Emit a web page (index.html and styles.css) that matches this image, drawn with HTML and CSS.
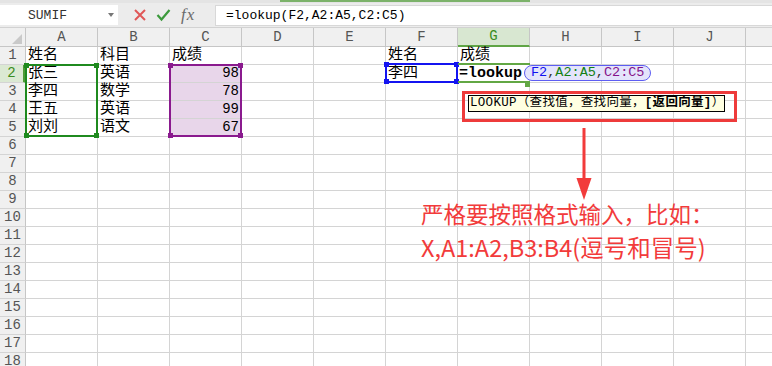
FILE: index.html
```html
<!DOCTYPE html>
<html lang="zh-CN">
<head>
    <meta charset="UTF-8">
    <title>LOOKUP</title>
    <link rel="stylesheet" href="styles.css">
</head>
<body>
    <div class="tab-strip"><div class="tab-active"></div></div>

    <div class="formula-bar">
        <div class="name-box">
            <span class="name-text">SUMIF</span>
            <span class="name-arrow"></span>
        </div>
        <div class="bar-icons">
            <svg class="icon-cancel" width="14" height="14" viewBox="0 0 14 14">
                <path d="M2 2 L12 12 M12 2 L2 12" stroke="#e05757" stroke-width="2" fill="none"/>
            </svg>
            <svg class="icon-enter" width="15" height="14" viewBox="0 0 15 14">
                <path d="M1.5 7 L5.5 11.5 L13.5 2" stroke="#3c9a3c" stroke-width="2.2" fill="none"/>
            </svg>
            <span class="icon-fx">fx</span>
        </div>
        <div class="formula-input">=lookup(F2,A2:A5,C2:C5)</div>
    </div>

    <div class="sheet-wrap">
        <table class="sheet">
            <colgroup>
                <col class="col-head">
                <col><col><col><col><col><col><col><col><col><col><col>
            </colgroup>
            <tr class="head-row">
                <th class="corner"><span class="corner-mark"></span></th>
                <th>A</th><th>B</th><th>C</th><th>D</th><th>E</th><th>F</th>
                <th class="head-active">G</th><th>H</th><th>I</th><th>J</th><th></th>
            </tr>
            <tr>
                <th>1</th>
                <td>姓名</td><td>科目</td><td>成绩</td><td></td><td></td>
                <td>姓名</td><td>成绩</td><td></td><td></td><td></td><td></td>
            </tr>
            <tr>
                <th class="row-active">2</th>
                <td>张三</td><td>英语</td><td class="picked num">98</td><td></td><td></td>
                <td>李四</td>
                <td class="editing"><span class="edit-fn">=lookup</span><span class="arg-pill"><span class="ref-f">F2</span>,<span class="ref-a">A2:A5</span>,<span class="ref-c">C2:C5</span></span></td>
                <td></td><td></td><td></td><td></td>
            </tr>
            <tr>
                <th>3</th>
                <td>李四</td><td>数学</td><td class="picked num">78</td><td></td><td></td>
                <td></td><td></td><td></td><td></td><td></td><td></td>
            </tr>
            <tr>
                <th>4</th>
                <td>王五</td><td>英语</td><td class="picked num">99</td><td></td><td></td>
                <td></td><td></td><td></td><td></td><td></td><td></td>
            </tr>
            <tr>
                <th>5</th>
                <td>刘刘</td><td>语文</td><td class="picked num">67</td><td></td><td></td>
                <td></td><td></td><td></td><td></td><td></td><td></td>
            </tr>
            <tr><th>6</th><td></td><td></td><td></td><td></td><td></td><td></td><td></td><td></td><td></td><td></td><td></td></tr>
            <tr><th>7</th><td></td><td></td><td></td><td></td><td></td><td></td><td></td><td></td><td></td><td></td><td></td></tr>
            <tr><th>8</th><td></td><td></td><td></td><td></td><td></td><td></td><td></td><td></td><td></td><td></td><td></td></tr>
            <tr><th>9</th><td></td><td></td><td></td><td></td><td></td><td></td><td></td><td></td><td></td><td></td><td></td></tr>
            <tr><th>10</th><td></td><td></td><td></td><td></td><td></td><td></td><td></td><td></td><td></td><td></td><td></td></tr>
            <tr><th>11</th><td></td><td></td><td></td><td></td><td></td><td></td><td></td><td></td><td></td><td></td><td></td></tr>
            <tr><th>12</th><td></td><td></td><td></td><td></td><td></td><td></td><td></td><td></td><td></td><td></td><td></td></tr>
            <tr><th>13</th><td></td><td></td><td></td><td></td><td></td><td></td><td></td><td></td><td></td><td></td><td></td></tr>
            <tr><th>14</th><td></td><td></td><td></td><td></td><td></td><td></td><td></td><td></td><td></td><td></td><td></td></tr>
            <tr><th>15</th><td></td><td></td><td></td><td></td><td></td><td></td><td></td><td></td><td></td><td></td><td></td></tr>
            <tr><th>16</th><td></td><td></td><td></td><td></td><td></td><td></td><td></td><td></td><td></td><td></td><td></td></tr>
            <tr><th>17</th><td></td><td></td><td></td><td></td><td></td><td></td><td></td><td></td><td></td><td></td><td></td></tr>
            <tr><th>18</th><td></td><td></td><td></td><td></td><td></td><td></td><td></td><td></td><td></td><td></td><td></td></tr>
        </table>

        <!-- range highlights drawn over the grid -->
        <div class="range range-a">
            <span class="handle h-tl"></span><span class="handle h-tr"></span>
            <span class="handle h-bl"></span><span class="handle h-br"></span>
        </div>
        <div class="range range-c">
            <span class="handle h-tl"></span><span class="handle h-tr"></span>
            <span class="handle h-bl"></span><span class="handle h-br"></span>
        </div>
        <div class="range range-f">
            <span class="handle h-tl"></span><span class="handle h-tr"></span>
            <span class="handle h-bl"></span><span class="handle h-br"></span>
        </div>
        <div class="edit-frame"><span class="edit-handle"></span></div>

        <div class="hint-box">
            <div class="hint-tip">LOOKUP（查找值，查找向量，<b>[返回向量]</b>）</div>
        </div>

        <svg class="note-arrow" width="18" height="74" viewBox="0 0 18 74">
            <rect x="7.5" y="0" width="3" height="54" fill="#f23b3b"/>
            <path d="M1.5 50 L16.5 50 L9 72 Z" fill="#f23b3b"/>
        </svg>

        <div class="note">
            <p class="note-line">严格要按照格式输入，比如：</p>
            <p class="note-line note-example">X,A1:A2,B3:B4(逗号和冒号)</p>
        </div>
    </div>
</body>
</html>
```

FILE: styles.css
```css
* {
    margin: 0;
    padding: 0;
    box-sizing: border-box;
}

body {
    width: 772px;
    height: 366px;
    overflow: hidden;
    background: #ffffff;
    font-family: "Liberation Mono", "Noto Sans CJK SC", monospace;
    color: #000000;
}

/* top strip + formula bar */

.tab-strip {
    height: 3px;
    background: #e4e4e4;
    display: flex;
}

.tab-active {
    margin-left: 280px;
    width: 250px;
    height: 2px;
    background: #7cb26a;
}

.formula-bar {
    height: 25px;
    background: #ececec;
    border-bottom: 1px solid #d2d2d2;
    display: flex;
    align-items: center;
}

.name-box {
    width: 118px;
    height: 20px;
    background: #ffffff;
    display: flex;
    align-items: center;
    position: relative;
}

.name-text {
    padding-left: 28px;
    font-size: 13px;
    color: #333333;
}

.name-arrow {
    position: absolute;
    left: 108px;
    top: 8px;
    border-left: 3px solid transparent;
    border-right: 3px solid transparent;
    border-top: 4px solid #777777;
}

.bar-icons {
    width: 97px;
    display: flex;
    align-items: center;
    padding-left: 15px;
}

.icon-cancel {
    margin-right: 9px;
}

.icon-enter {
    margin-right: 10px;
}

.icon-fx {
    font-family: "Liberation Serif", serif;
    font-style: italic;
    font-size: 17px;
    color: #6a6a6a;
    letter-spacing: 1px;
}

.formula-input {
    flex: 1;
    height: 21px;
    background: #ffffff;
    border: 1px solid #d8d8d8;
    border-right: none;
    padding-left: 10px;
    font-size: 13px;
    line-height: 19px;
}

/* grid */

.sheet-wrap {
    position: relative;
    height: 338px;
    overflow: hidden;
}

.sheet {
    table-layout: fixed;
    border-collapse: separate;
    border-spacing: 0;
    width: 818px;
}

.sheet col {
    width: 72px;
}

.sheet col.col-head {
    width: 26px;
}

.sheet th,
.sheet td {
    height: 18px;
    padding: 0;
    border-right: 1px solid #d4d4d4;
    border-bottom: 1px solid #d4d4d4;
    font-size: 15px;
    line-height: 17px;
    white-space: nowrap;
    text-align: left;
    font-weight: normal;
    vertical-align: middle;
}

.sheet td {
    padding-left: 2px;
}

.sheet tr > th {
    background: #f0f0f0;
    color: #555555;
    font-size: 14px;
    text-align: center;
    border-right-color: #c6c6c6;
}

.head-row th {
    height: 19px;
    text-align: center;
    font-size: 14px;
    color: #444444;
    border-right-color: #dcdcdc;
    border-bottom-color: #c6c6c6;
}

.head-row th.head-active {
    background: #d8e7d1;
    color: #3a8c22;
    border-bottom: 2px solid #5fa545;
}

.corner {
    position: relative;
}

.corner-mark {
    position: absolute;
    right: 3px;
    bottom: 2px;
    border-left: 10px solid transparent;
    border-bottom: 10px solid #c9c9c9;
}

.sheet th.row-active {
    background: #dbe9d3;
    color: #3a8c22;
    border-right: 3px solid #4e9a36;
}

.sheet td.picked {
    background: #e8d6ea;
}

.sheet td.num {
    text-align: right;
    padding-right: 2px;
    font-size: 14px;
}

.sheet td.editing {
    overflow: visible;
    padding-left: 1px;
}

.edit-fn {
    font-weight: bold;
    font-size: 15px;
}

.arg-pill {
    display: inline-block;
    margin-left: 2px;
    height: 16px;
    padding: 0 6px;
    border: 1px solid #5d5df2;
    border-radius: 8px;
    background: #e4e4fb;
    font-size: 13.5px;
    line-height: 14px;
    color: #333333;
    vertical-align: 1px;
}

.ref-f { color: #1010f0; }
.ref-a { color: #138013; }
.ref-c { color: #85128a; }

/* overlays */

.range {
    position: absolute;
    border: 2px solid;
}

.range-a {
    left: 25px;
    top: 36px;
    width: 73px;
    height: 73px;
    border-color: #1f8a1f;
}

.range-c {
    left: 169px;
    top: 36px;
    width: 73px;
    height: 73px;
    border-color: #8a1a8e;
}

.range-f {
    left: 385px;
    top: 35px;
    width: 73px;
    height: 20px;
    border-color: #1414f0;
}

.handle {
    position: absolute;
    width: 5px;
    height: 5px;
}

.range-a .handle { background: #1f8a1f; }
.range-c .handle { background: #8a1a8e; }
.range-f .handle { background: #1414f0; }

.h-tl { left: -3px; top: -3px; }
.h-tr { right: -3px; top: -3px; }
.h-bl { left: -3px; bottom: -3px; }
.h-br { right: -3px; bottom: -3px; }

.edit-frame {
    position: absolute;
    left: 458px;
    top: 35px;
    width: 72px;
    height: 20px;
    border-top: 2px solid #62a744;
    border-bottom: 2px solid #62a744;
    pointer-events: none;
}

.edit-handle {
    position: absolute;
    right: 0;
    bottom: -6px;
    width: 5px;
    height: 5px;
    background: #62a744;
}

.hint-box {
    position: absolute;
    left: 462px;
    top: 63px;
    width: 275px;
    height: 31px;
    border: 3px solid #ee3b3b;
    padding: 1px 0 0 3px;
}

.hint-tip {
    width: 257px;
    height: 17px;
    background: #ffffe1;
    border: 1px solid #000000;
    font-size: 12.5px;
    letter-spacing: 0.3px;
    line-height: 15px;
    padding-left: 1px;
    white-space: nowrap;
}

.hint-tip b {
    font-weight: bold;
}

.note-arrow {
    position: absolute;
    left: 575px;
    top: 100px;
}

.note {
    position: absolute;
    left: 421px;
    top: 169px;
    color: #f23b3b;
    font-family: "Noto Sans CJK SC", sans-serif;
}

.note-line {
    font-size: 22.5px;
    line-height: 33px;
    white-space: nowrap;
}

.note-example {
    font-size: 23.5px;
    line-height: 34px;
}
```
